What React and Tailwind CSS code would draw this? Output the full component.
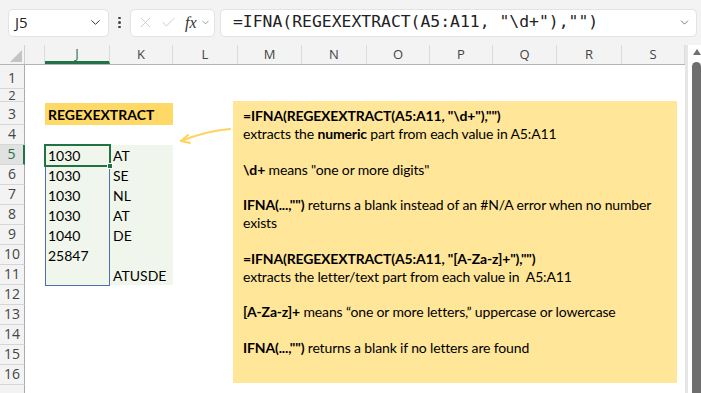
import { ChevronDown, X, Check } from 'lucide-react';

const cols = [
  { id: 'I', w: 'w-[20px]' },
  { id: 'J', w: 'w-[65px]' },
  { id: 'K', w: 'w-[63px]' },
  { id: 'L', w: 'w-[65px]' },
  { id: 'M', w: 'w-[64px]' },
  { id: 'N', w: 'w-[65px]' },
  { id: 'O', w: 'w-[63px]' },
  { id: 'P', w: 'w-[63px]' },
  { id: 'Q', w: 'w-[64px]' },
  { id: 'R', w: 'w-[65px]' },
  { id: 'S', w: 'w-[63px]' },
];

const rows = [
  { n: 1, h: 'h-[24px]' },
  { n: 2, h: 'h-[13px]' },
  { n: 3, h: 'h-[23px]' },
  { n: 4, h: 'h-[20px]' },
  { n: 5, h: 'h-[20px]', j: '1030', k: 'AT' },
  { n: 6, h: 'h-[20px]', j: '1030', k: 'SE' },
  { n: 7, h: 'h-[20px]', j: '1030', k: 'NL' },
  { n: 8, h: 'h-[20px]', j: '1030', k: 'AT' },
  { n: 9, h: 'h-[20px]', j: '1040', k: 'DE' },
  { n: 10, h: 'h-[20px]', j: '25847', k: '' },
  { n: 11, h: 'h-[20px]', j: '', k: 'ATUSDE' },
  { n: 12, h: 'h-[20px]' },
  { n: 13, h: 'h-[20px]' },
  { n: 14, h: 'h-[20px]' },
  { n: 15, h: 'h-[20px]' },
  { n: 16, h: 'h-[20px]' },
];

const cellFont = "font-['Lato',sans-serif] text-[14px] text-black";

function SheetRow({ r }) {
  const selected = r.n === 5;
  const label = r.n === 2 ? 'pb-0 text-[13px] leading-[12px]' : 'pb-[3px] text-[14px] leading-none';
  return (
    <div className={`flex ${r.h}`}>
      <div
        className={`w-[25px] shrink-0 flex items-end justify-center border-b border-[#d6d6d6] font-['Open_Sans',sans-serif] ${label} ${
          selected ? 'bg-[#e1e1e1] text-[#217346] border-r-2 border-r-[#217346]' : 'bg-[#f3f3f3] text-[#444] border-r border-r-[#ababab]'
        }`}
      >
        {r.n}
      </div>
      <div className="w-[20px] shrink-0" />
      {r.n === 3 ? (
        <div className="w-[128px] shrink-0 flex items-end">
          <div className={`w-full h-[22px] bg-[#ffd966] flex items-center pl-[3px] font-bold ${cellFont}`}>REGEXEXTRACT</div>
        </div>
      ) : r.n >= 5 && r.n <= 11 ? (
        <>
          <div className={`w-[65px] shrink-0 bg-[#f0f6ec] flex items-center pl-[3px] ${cellFont}`}>{r.j}</div>
          <div className={`w-[63px] shrink-0 bg-[#f0f6ec] flex items-center pl-[3px] ${cellFont}`}>{r.k}</div>
        </>
      ) : (
        <div className="w-[128px] shrink-0" />
      )}
      <div className="flex-1" />
    </div>
  );
}

export default function App() {
  return (
    <div className="relative w-[701px] h-[393px] overflow-hidden bg-white">
      {/* formula bar */}
      <div className="h-[45px] bg-[#f3f3f3] flex items-center">
        <div className="ml-[8px] w-[101px] h-[28px] bg-white rounded-[5px] border border-[#e3e3e3] flex items-center justify-between pl-[6px] pr-[5px]">
          <span className="font-['Open_Sans',sans-serif] text-[15px] text-[#222]">J5</span>
          <ChevronDown size={15} strokeWidth={1.6} className="text-[#333]" />
        </div>
        <div className="w-[21px] flex flex-col items-center gap-[2px]">
          <span className="w-[2.5px] h-[2.5px] rounded-full bg-[#444]" />
          <span className="w-[2.5px] h-[2.5px] rounded-full bg-[#444]" />
          <span className="w-[2.5px] h-[2.5px] rounded-full bg-[#444]" />
        </div>
        <div className="w-[85px] h-[28px] bg-white rounded-[5px] border border-[#e3e3e3] flex items-center pl-[6px] gap-[6px]">
          <X size={17} strokeWidth={1.2} className="text-[#c3c3c3]" />
          <Check size={17} strokeWidth={1.2} className="text-[#c3c3c3]" />
          <span className="font-['Liberation_Serif',serif] italic text-[16px] text-[#333] ml-[2px]">fx</span>
          <ChevronDown size={11} strokeWidth={1.5} className="text-[#777] -ml-[3px]" />
        </div>
        <div className="ml-[5px] w-[477px] h-[28px] bg-white rounded-[5px] border border-[#e3e3e3] flex items-center justify-between pl-[12px] pr-[5px]">
          <span className="font-['DejaVu_Sans_Mono',monospace] text-[16.4px] text-[#222] whitespace-pre">=IFNA(REGEXEXTRACT(A5:A11, "\d+"),"")</span>
          <ChevronDown size={13} strokeWidth={1.4} className="text-[#555]" />
        </div>
      </div>

      {/* column headers */}
      <div className="flex h-[20px] bg-[#f3f3f3] border-b border-[#b4b4b4]">
        <div className="w-[25px] shrink-0 border-r border-[#d0d0d0] relative">
          <svg width="14" height="14" viewBox="0 0 14 14" className="absolute right-[1px] bottom-[1px]">
            <polygon points="13,1 13,13 1,13" fill="#c4c4c4" />
          </svg>
        </div>
        {cols.map((c) => (
          <div
            key={c.id}
            className={`${c.w} shrink-0 flex items-center justify-center border-r border-[#dcdcdc] text-[13px] font-['Open_Sans',sans-serif] ${
              c.id === 'J' ? 'text-[#217346] border-b-[3px] border-b-[#217346] pt-[2px]' : 'text-[#444]'
            }`}
          >
            {c.id === 'I' ? '' : c.id}
          </div>
        ))}
        <div className="flex-1" />
      </div>

      {/* grid */}
      <div className="flex flex-col">
        {rows.map((r) => (
          <SheetRow key={r.n} r={r} />
        ))}
        <div className="flex h-[20px]">
          <div className="w-[25px] shrink-0 bg-[#f3f3f3] border-r border-r-[#ababab]" />
        </div>
      </div>

      {/* spill range + active cell */}
      <div className="absolute left-[45px] top-[145px] w-[65px] h-[141px] border border-[#4a6fb5]" />
      <div className="absolute left-[44px] top-[144px] w-[67px] h-[23px] border-2 border-[#217346]" />
      <div className="absolute left-[107px] top-[163px] w-[6px] h-[6px] bg-[#217346] border border-white" />

      {/* arrow */}
      <svg className="absolute left-[170px] top-[120px]" width="70" height="35" viewBox="170 120 70 35">
        <path d="M230 129 Q 206 131 181 141" fill="none" stroke="#ffd45c" strokeWidth="2" strokeLinecap="round" />
        <path d="M188 135 L181 141 L190 143" fill="none" stroke="#ffd45c" strokeWidth="2" strokeLinecap="round" strokeLinejoin="round" />
      </svg>

      {/* note */}
      <div className="absolute left-[233px] top-[101px] w-[444px] h-[282px] bg-[#ffe699] pt-[6px] pl-[10px] font-['Lato',sans-serif] text-[14px] tracking-[-0.15px] leading-[17.85px] text-black whitespace-pre">
        <div><b>=IFNA(REGEXEXTRACT(A5:A11, "\d+"),"")</b></div>
        <div>extracts the <b>numeric</b> part from each value in A5:A11</div>
        <div>&nbsp;</div>
        <div><b>\d+</b> means "one or more digits"</div>
        <div>&nbsp;</div>
        <div><b>IFNA(...,"")</b> returns a blank instead of an #N/A error when no number</div>
        <div>exists</div>
        <div>&nbsp;</div>
        <div><b>=IFNA(REGEXEXTRACT(A5:A11, "[A-Za-z]+"),"")</b></div>
        <div>extracts the letter/text part from each value in  A5:A11</div>
        <div>&nbsp;</div>
        <div><b>[A-Za-z]+</b> means “one or more letters,” uppercase or lowercase</div>
        <div>&nbsp;</div>
        <div><b>IFNA(...,"")</b> returns a blank if no letters are found</div>
      </div>

      {/* scrollbar */}
      <div className="absolute left-[685px] top-[45px] w-[16px] h-[348px] flex">
        <div className="w-[3px] h-full bg-[#e6e6e6]" />
        <div className="w-[4px] h-full bg-white" />
        <div className="w-[9px] h-full flex flex-col items-center bg-white">
          <svg width="8" height="6" viewBox="0 0 8 6" className="mt-[4px]">
            <polygon points="4,0 8,6 0,6" fill="#707070" />
          </svg>
          <div className="mt-[7px] w-full flex-1 bg-[#6e6e6e] rounded-t-full" />
        </div>
      </div>
    </div>
  );
}
